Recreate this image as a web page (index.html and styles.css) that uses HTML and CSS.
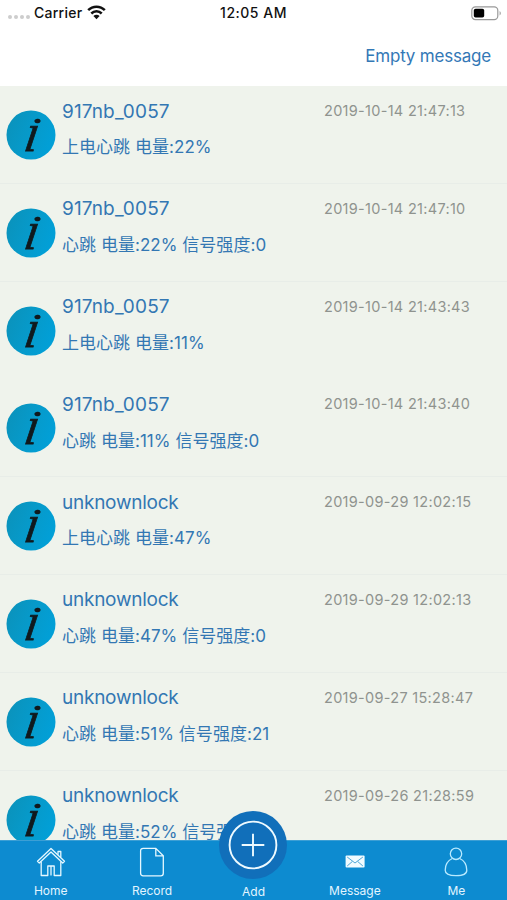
FILE: index.html
```html
<!DOCTYPE html>
<html lang="en">
<head>
<meta charset="utf-8">
<title>Messages</title>
<link rel="stylesheet" href="styles.css">
</head>
<body>
<svg class="defs" aria-hidden="true">
  <defs>
    <linearGradient id="disc" x1="0" y1="0" x2="1" y2="0.4"><stop offset="0" stop-color="#0b91b9"/><stop offset="0.5" stop-color="#0799c8"/><stop offset="1" stop-color="#029fd6"/></linearGradient>
    <symbol id="info" viewBox="0 0 50 50">
      <circle cx="25" cy="25" r="24.5" fill="url(#disc)"/>
      <ellipse cx="31.500" cy="11" rx="3.100" ry="2.300" transform="rotate(-10 31.5 11)" fill="#10191d"/>
      <text class="info-mark" transform="translate(17 40.500) skewX(-10) scale(.88 1)">ı</text>
    </symbol>
  </defs>
</svg>
<div class="screen">
  <header class="status">
    <div class="carrier">
      <span class="signal"><i></i><i></i><i></i><i></i></span>
      <span>Carrier</span>
      <svg class="wifi" viewBox="0 0 19 15"><g fill="none" stroke="#111" stroke-width="2.5"><path d="M1.2 5.2C5.8.5 13.2.5 17.8 5.2"/><path d="M4.3 8.5C7.2 5.6 11.8 5.6 14.7 8.5"/></g><path d="M6.4 10.9C8.2 9.3 10.8 9.3 12.6 10.9L9.5 14.2Z" fill="#111"/></svg>
    </div>
    <span class="clock">12:05 AM</span>
    <svg class="battery" viewBox="0 0 31 15"><rect x=".8" y=".8" width="26" height="12.8" rx="3.6" fill="none" stroke="#999" stroke-width="1.2"/><rect x="2.8" y="2.8" width="10.4" height="8.8" rx="1.8" fill="#000"/><path d="M28.6 5C30.2 5.8 30.2 8.6 28.6 9.4Z" fill="#999"/></svg>
  </header>
  <div class="toolbar"><a>Empty message</a></div>
  <main class="list">
    <article class="row"><svg class="avatar"><use href="#info"/></svg><div class="body"><div class="top"><h2>917nb_0057</h2><time>2019-10-14 21:47:13</time></div><p>上电心跳 电量:22%</p></div></article>
    <article class="row"><svg class="avatar"><use href="#info"/></svg><div class="body"><div class="top"><h2>917nb_0057</h2><time>2019-10-14 21:47:10</time></div><p>心跳 电量:22% 信号强度:0</p></div></article>
    <article class="row plain"><svg class="avatar"><use href="#info"/></svg><div class="body"><div class="top"><h2>917nb_0057</h2><time>2019-10-14 21:43:43</time></div><p>上电心跳 电量:11%</p></div></article>
    <article class="row"><svg class="avatar"><use href="#info"/></svg><div class="body"><div class="top"><h2>917nb_0057</h2><time>2019-10-14 21:43:40</time></div><p>心跳 电量:11% 信号强度:0</p></div></article>
    <article class="row"><svg class="avatar"><use href="#info"/></svg><div class="body"><div class="top"><h2 class="word">unknownlock</h2><time>2019-09-29 12:02:15</time></div><p>上电心跳 电量:47%</p></div></article>
    <article class="row"><svg class="avatar"><use href="#info"/></svg><div class="body"><div class="top"><h2 class="word">unknownlock</h2><time>2019-09-29 12:02:13</time></div><p>心跳 电量:47% 信号强度:0</p></div></article>
    <article class="row"><svg class="avatar"><use href="#info"/></svg><div class="body"><div class="top"><h2 class="word">unknownlock</h2><time>2019-09-27 15:28:47</time></div><p>心跳 电量:51% 信号强度:21</p></div></article>
    <article class="row"><svg class="avatar"><use href="#info"/></svg><div class="body"><div class="top"><h2 class="word">unknownlock</h2><time>2019-09-26 21:28:59</time></div><p>心跳 电量:52% 信号强</p></div></article>
  </main>
  <nav class="tabs">
    <a class="tab"><svg viewBox="0 0 30 30"><g fill="none" stroke="#e6f8ff" stroke-width="1.3" stroke-linejoin="round"><path d="M1.5 14.2 15 1.5 28.5 14.2 26.7 16 15 5 3.3 16Z"/><path d="M5.2 14.5V28.5H11.8V19H18.2V28.5H24.8V14.5M22 7.8V4.5H24.8V10.5M15 19V28.5"/></g></svg><span>Home</span></a>
    <a class="tab"><svg viewBox="0 0 30 30"><path d="M6.2 1.3H18.8L26.3 8.8V26.2Q26.3 28.8 23.7 28.8H6.2Q3.6 28.8 3.6 26.2V3.9Q3.6 1.3 6.2 1.3ZM18.8 1.3V8.8H26.3" fill="none" stroke="#e6f8ff" stroke-width="1.3"/></svg><span>Record</span></a>
    <a class="tab add"><svg viewBox="0 0 68 68"><circle cx="34" cy="34" r="34" fill="#116fba"/><circle cx="34" cy="34" r="23.4" fill="none" stroke="#eefaff" stroke-width="1.9"/><path d="M34 22.700V45.300M22.700 34H45.300" stroke="#eefaff" stroke-width="1.9"/></svg><span>Add</span></a>
    <a class="tab"><svg viewBox="0 0 30 30"><rect x="5.600" y="8.500" width="19" height="12" rx="1" fill="#f1fbff"/><path d="M7.200 10 15 16 22.900 10M7.200 19 12.300 14.500M22.900 19 17.700 14.500" fill="none" stroke="#268fcb" stroke-width=".8"/></svg><span>Message</span></a>
    <a class="tab"><svg viewBox="0 0 30 30"><g fill="none" stroke="#b9eaff" stroke-width="1.3"><circle cx="15" cy="6.800" r="5.700"/><path d="M11.300 11.500C7 13.500 4.200 18 4.200 23.200 4.200 27 7.500 28.600 15 28.600S25.800 27 25.800 23.200C25.800 18 23 13.500 18.700 11.500"/></g></svg><span>Me</span></a>
  </nav>
</div>
</body>
</html>
```
FILE: styles.css
```css
* { box-sizing: border-box; }
body { margin: 0; font-family: Inter, "Noto Sans CJK SC", sans-serif; background: #fff; }
.defs { display: block; width: 0; height: 0; }
.screen { width: 507px; height: 900px; display: flex; flex-direction: column; overflow: hidden; }

.status { height: 26px; flex: none; display: grid; grid-template-columns: 1fr auto 1fr; align-items: center; padding: 0 5px 0 8px; font-size: 14px; line-height: 18px; font-weight: 500; color: #111; }
.carrier { display: flex; align-items: center; }
.carrier > span:nth-child(2) { margin-left: 4px; letter-spacing: .25px; }
.signal { display: flex; gap: 2px; padding-top: 8px; }
.signal i { width: 4px; height: 4px; border-radius: 50%; background: #cdcdcd; }
.wifi { width: 19px; height: 15px; margin-left: 5px; }
.clock, .carrier { margin-top: -1px; }
.clock { letter-spacing: .5px; margin-left: -3px; }
.battery { width: 31px; height: 15px; justify-self: end; }

.toolbar { height: 60px; flex: none; display: flex; justify-content: flex-end; align-items: center; padding-right: 16px; font-size: 17px; letter-spacing: -.2px; color: #3378b6; }

.list { flex: 1; min-height: 0; overflow: hidden; background: #eff3ec; }
.row { height: 97.8px; display: flex; padding: 12px 0 0 6px; gap: 6px; border-bottom: 1px solid #e8ede8; }
.row.plain { border-color: transparent; }
.avatar { width: 50px; height: 50px; margin-top: 12px; flex: none; }
.info-mark { font: italic 54px "Liberation Serif", serif; fill: #10191d; stroke: #10191d; stroke-width: .9px; }
.body { flex: 1; color: #3377b3; }
.top { display: grid; grid-template-columns: 262px 1fr; align-items: center; height: 26px; }
h2 { margin: 0; font-size: 19px; font-weight: 400; letter-spacing: .15px; }
.word { letter-spacing: -.25px; }
time { margin-top: -1px; font-size: 14.5px; letter-spacing: .3px; color: #8f938f; }
p { margin: 10.3px 0 0; font-size: 17px; line-height: 26px; letter-spacing: .04px; white-space: nowrap; }

.tabs { height: 60px; flex: none; display: grid; grid-template-columns: repeat(5, 1fr); background: #0d8bd0; border-top: 1px solid #3c9fd5; }
.tab { display: flex; flex-direction: column; align-items: center; padding-top: 6px; font-size: 12px; line-height: 16px; color: #e3f5ff; }
.tab svg { width: 30px; height: 30px; margin-bottom: 6px; }
.add { padding-top: 0; }
.add svg { width: 68px; height: 68px; margin: -30px 0 5px; flex: none; }
```
